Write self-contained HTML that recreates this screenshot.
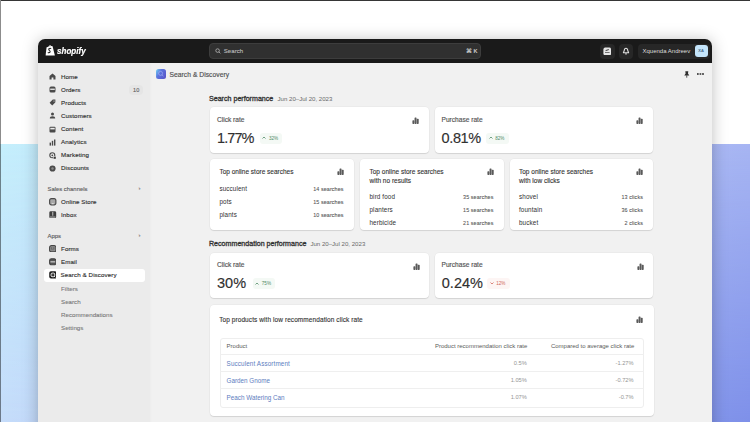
<!DOCTYPE html>
<html><head><meta charset="utf-8">
<style>
*{margin:0;padding:0;box-sizing:border-box}
html,body{width:750px;height:422px;overflow:hidden;background:#fff;font-family:"Liberation Sans",sans-serif;color:#303030}
#bg{position:absolute;left:0;top:144px;width:750px;height:278px;background:linear-gradient(90deg,#c5effc 0%,#a7b5f3 100%)}
#bg2{position:absolute;left:0;top:144px;width:750px;height:278px;background:linear-gradient(90deg,#c5dcfa 0%,#7e90e9 100%);-webkit-mask-image:linear-gradient(180deg,transparent 0%,#000 100%)}
#topline{position:absolute;left:1px;top:0;width:749px;height:1px;background:#363636}
#leftline{position:absolute;left:0;top:0;width:1px;height:422px;background:rgba(0,0,0,.45)}
#win{position:absolute;left:38px;top:38.6px;width:674px;height:400px;border-radius:7px 7px 0 0;overflow:hidden;background:#f1f1f1;box-shadow:0 1px 16px rgba(0,0,0,.26)}
#hdr{position:absolute;left:0;top:0;width:674px;height:24.9px;background:#1a1a1a}
#side{position:absolute;left:0;top:24.9px;width:112px;height:400px;background:#ebebeb;box-shadow:1px 0 2px rgba(0,0,0,.02)}
.a{position:absolute;white-space:nowrap}
.t{position:absolute;white-space:nowrap;line-height:10px;height:10px}
.nav{font-size:6.2px;font-weight:400;color:#303030;-webkit-text-stroke:.14px #303030;letter-spacing:.1px;margin-top:-.3px}
.sub{font-size:6.2px;font-weight:400;color:#777;-webkit-text-stroke:.08px #777}
.sec{font-size:5.9px;color:#5a5a5a;-webkit-text-stroke:.12px #5a5a5a;margin-top:.6px}
.ic{position:absolute;width:7px;height:7px}
.card{position:absolute;background:#fff;border-radius:4px;box-shadow:0 1px 1px rgba(0,0,0,.10),0 0 0 .5px rgba(0,0,0,.05)}
.ct{font-size:6.6px;font-weight:400;color:#555;-webkit-text-stroke:.16px #555}
.ch{font-size:6.5px;font-weight:400;color:#303030;-webkit-text-stroke:.1px #303030}
.big{font-size:14.5px;font-weight:400;color:#303030;-webkit-text-stroke:.15px #303030;line-height:10px}
.badge{position:absolute;height:10.5px;border-radius:3px;font-size:4.6px;line-height:12.5px;padding:0 4.3px 0 9.2px;white-space:nowrap}
.badge svg{position:absolute;left:2.6px;top:3.4px}
.g{background:#f4f9f5;color:#4f8a66}
.r{background:#fdf5f4;color:#d0675a}
.row{font-size:6.3px;color:#303030;letter-spacing:.12px}
.rv{font-size:5.4px;color:#555;text-align:right;-webkit-text-stroke:.08px #555;letter-spacing:.1px}
.th{font-size:6px;color:#5a5a5a}
.tv{font-size:5.7px;color:#959595;text-align:right}
.lk{font-size:6.3px;color:#5c7cc0;margin-top:.6px}
.hline{position:absolute;height:1px;background:#efefef}
</style></head><body>
<div id="bg"></div>
<div id="bg2"></div>
<div id="topline"></div>
<div id="leftline"></div>
<div id="win">
  <div id="hdr"></div>
  <div id="side"></div>
</div>

<!-- header content -->
<svg class="a" style="left:45.4px;top:44.4px" width="10.6" height="12" viewBox="0 0 10.6 12">
  <path d="M1.6 3.2 L6.2 1.9 L7.6 2.3 L9.9 11.4 L0.6 11.6 Z" fill="#fff"/>
  <path d="M3.6 3.4 Q4.6 .3 6.2 2.4" stroke="#fff" stroke-width="1" fill="none"/>
  <path d="M6.2 4.6 Q5.2 4 4.1 4.6 Q3.3 5.4 4.4 6.4 Q5.6 7.2 5 8.2 Q4.2 9 2.8 8.4" stroke="#1a1a1a" stroke-width="1.05" fill="none"/>
</svg>
<div class="t" style="left:57.3px;top:46px;font-size:9.6px;font-weight:700;font-style:italic;color:#fff;-webkit-text-stroke:.2px #fff;transform:scaleX(.84);transform-origin:0 0">shopify</div>

<div class="a" style="left:209px;top:43px;width:272px;height:15.5px;background:#303030;border-radius:4px;border:.5px solid #3d3d3d"></div>
<svg class="a" style="left:214.5px;top:47.5px" width="6" height="6" viewBox="0 0 6 6"><circle cx="2.6" cy="2.6" r="1.8" stroke="#b5b5b5" stroke-width=".8" fill="none"/><path d="M3.9 3.9 L5.4 5.4" stroke="#b5b5b5" stroke-width=".8"/></svg>
<div class="t" style="left:223.8px;top:45.7px;font-size:6.1px;color:#bdbdbd;-webkit-text-stroke:.1px #bdbdbd">Search</div>
<div class="t" style="left:466px;top:45.5px;font-size:5.6px;color:#c9c9c9;font-weight:700">⌘ K</div>

<div class="a" style="left:600px;top:43.5px;width:14.5px;height:15px;background:#272727;border-radius:4px"></div>
<svg class="a" style="left:602.8px;top:46.6px" width="8.6" height="8.6" viewBox="0 0 8.6 8.6"><rect x=".4" y=".6" width="7.8" height="7.6" rx="1.8" fill="#e6e6e6"/><path d="M2.6 3.6 L5.8 2.6" stroke="#333" stroke-width="1" fill="none"/><rect x="2" y="5.2" width="4.6" height=".8" fill="#555"/></svg>
<div class="a" style="left:618.5px;top:43.5px;width:14.5px;height:15px;background:#272727;border-radius:4px"></div>
<svg class="a" style="left:621.8px;top:47px" width="8" height="8" viewBox="0 0 8 8"><path d="M4 1.2 C2.6 1.2 2.3 2.4 2.2 3.6 L1.4 5.8 L6.6 5.8 L5.8 3.6 C5.7 2.4 5.4 1.2 4 1.2 Z" stroke="#e0e0e0" stroke-width="1.1" fill="none" stroke-linejoin="round"/><path d="M3.1 6.9 L4.9 6.9" stroke="#e0e0e0" stroke-width="1"/></svg>
<div class="a" style="left:637.5px;top:43.5px;width:72px;height:15px;background:#272727;border-radius:4px"></div>
<div class="t" style="left:642.5px;top:46px;font-size:6px;color:#dcdcdc;font-weight:400">Xquenda Andreev</div>
<div class="a" style="left:694.5px;top:44.5px;width:13.3px;height:12.7px;background:#c4e5fb;border-radius:3px;font-size:4px;line-height:12.7px;text-align:center;color:#4a6a8a;font-weight:700">XA</div>

<!-- sidebar -->
<div id="nav">
<svg class="ic" style="left:48.5px;top:72.8px" viewBox="0 0 7 7"><path d="M3.5 .6 L6.5 3 L6.5 6.6 L4.4 6.6 L4.4 4.6 L2.6 4.6 L2.6 6.6 L.5 6.6 L.5 3 Z" fill="#4a4a4a"/></svg>
<div class="t nav" style="left:61px;top:71.8px">Home</div>
<svg class="ic" style="left:48.5px;top:86px" viewBox="0 0 7 7"><rect x=".5" y=".5" width="6" height="6" rx="1.5" fill="#4a4a4a"/><rect x="1.2" y="2.6" width="4.6" height="1.3" fill="#ebebeb"/></svg>
<div class="t nav" style="left:61px;top:84.9px">Orders</div>
<div class="a" style="left:129.2px;top:85px;width:14px;height:10px;border-radius:4px;background:#e5e5e5;font-size:5.6px;line-height:11.6px;text-align:center;color:#5f5f5f;-webkit-text-stroke:.1px #5f5f5f">10</div>
<svg class="ic" style="left:48.5px;top:99.2px" viewBox="0 0 7 7"><path d="M3.8 .6 L6.4 .6 L6.4 3.2 L3.2 6.4 L.6 3.8 Z" fill="#4a4a4a"/><circle cx="5" cy="2" r=".6" fill="#ebebeb"/></svg>
<div class="t nav" style="left:61px;top:98px">Products</div>
<svg class="ic" style="left:48.5px;top:112.3px" viewBox="0 0 7 7"><circle cx="3.5" cy="1.9" r="1.5" fill="#4a4a4a"/><path d="M.8 6.6 Q.8 4.2 3.5 4.2 Q6.2 4.2 6.2 6.6 Z" fill="#4a4a4a"/></svg>
<div class="t nav" style="left:61px;top:111px">Customers</div>
<svg class="ic" style="left:48.5px;top:125.5px" viewBox="0 0 7 7"><rect x=".5" y=".8" width="6" height="5.6" rx="1" fill="#4a4a4a"/><rect x="1.3" y="1.8" width="4.4" height="1.6" fill="#ebebeb"/></svg>
<div class="t nav" style="left:61px;top:124.4px">Content</div>
<svg class="ic" style="left:48.5px;top:138.5px" viewBox="0 0 7 7"><rect x=".6" y="3.6" width="1.4" height="3" fill="#4a4a4a"/><rect x="2.8" y="1.8" width="1.4" height="4.8" fill="#4a4a4a"/><rect x="5" y=".5" width="1.4" height="6.1" fill="#4a4a4a"/></svg>
<div class="t nav" style="left:61px;top:137.4px">Analytics</div>
<svg class="ic" style="left:48.5px;top:151.5px" viewBox="0 0 7 7"><circle cx="3.3" cy="3.3" r="2.5" stroke="#4a4a4a" stroke-width="1.1" fill="none"/><circle cx="3.3" cy="3.3" r=".9" fill="#4a4a4a"/><rect x="4" y="4" width="3" height="3" fill="#ebebeb"/><rect x="4.6" y="4.6" width="2.2" height="2.2" fill="#3a3a3a"/></svg>
<div class="t nav" style="left:61px;top:150.3px">Marketing</div>
<svg class="ic" style="left:48.5px;top:164.8px" viewBox="0 0 7 7"><circle cx="3.5" cy="3.5" r="3.1" fill="#4a4a4a"/><circle cx="3.5" cy="3.5" r="1.2" fill="#8a8a8a"/></svg>
<div class="t nav" style="left:61px;top:163.6px">Discounts</div>

<div class="t sec" style="left:47.5px;top:183.4px">Sales channels</div>
<div class="t sec" style="left:138.6px;top:182.6px;color:#8a8a8a">›</div>
<svg class="ic" style="left:49px;top:198px;width:7.5px;height:7.5px" viewBox="0 0 7 7"><rect x=".6" y=".6" width="5.8" height="5.8" rx="1.5" fill="#a8a8a8" stroke="#4a4a4a" stroke-width="1.1"/><rect x="2.6" y="5" width="1.8" height=".8" fill="#eee"/></svg>
<div class="t nav" style="left:61px;top:197px">Online Store</div>
<svg class="ic" style="left:49px;top:210.8px;width:7.5px;height:7.5px" viewBox="0 0 7 7"><rect x=".3" y=".3" width="6.4" height="6.4" rx="1.3" fill="#3e3e3e"/><rect x="3" y=".8" width="1" height="3.6" fill="#bbb"/><rect x="1" y="5.2" width="5" height=".9" fill="#bbb"/></svg>
<div class="t nav" style="left:61px;top:210.3px">Inbox</div>

<div class="t sec" style="left:47.5px;top:230px">Apps</div>
<div class="t sec" style="left:138.6px;top:229.6px;color:#8a8a8a">›</div>
<svg class="ic" style="left:48.6px;top:244.8px;width:7.6px;height:7.6px" viewBox="0 0 7 7"><rect x=".6" y=".6" width="5.8" height="5.8" rx="1.6" fill="#9a9a9a" stroke="#444" stroke-width="1.1"/><rect x="1.8" y="2.2" width="1.4" height="1.2" fill="#555"/><rect x="3.8" y="2.2" width="1.4" height="1.2" fill="#555"/><rect x="1.8" y="4" width="3.4" height=".9" fill="#666"/></svg>
<div class="t nav" style="left:61px;top:244px">Forms</div>
<svg class="ic" style="left:48.6px;top:258.2px;width:7.6px;height:7.6px" viewBox="0 0 7 7"><rect x=".6" y=".8" width="5.8" height="5.4" rx="1.6" fill="#555" stroke="#444" stroke-width="1.1"/><rect x="1.3" y="2.8" width="4.4" height="1.4" fill="#b5b5b5"/></svg>
<div class="t nav" style="left:61px;top:257px">Email</div>
<div class="a" style="left:43.7px;top:269px;width:101.3px;height:13px;background:#fff;border-radius:3px"></div>
<svg class="ic" style="left:48.5px;top:271.2px;width:7.8px;height:7.8px" viewBox="0 0 7 7"><rect x=".2" y=".2" width="6.6" height="6.6" rx="1.6" fill="#1a1a1a"/><rect x="1.9" y="1.9" width="3.2" height="3.2" rx=".9" fill="none" stroke="#fff" stroke-width=".85"/><rect x="3.2" y="3.2" width=".7" height=".7" fill="#fff"/><path d="M4.6 4.6 L5.6 5.6" stroke="#fff" stroke-width=".8"/></svg>
<div class="t nav" style="left:60.5px;top:270px">Search &amp; Discovery</div>
<div class="t sub" style="left:61px;top:283.6px;font-weight:400">Filters</div>
<div class="t sub" style="left:61px;top:296.7px;font-weight:400">Search</div>
<div class="t sub" style="left:61px;top:309.6px;font-weight:400">Recommendations</div>
<div class="t sub" style="left:61px;top:322.7px;font-weight:400">Settings</div>
</div>

<!-- app bar -->
<div class="a" style="left:156px;top:69px;width:10px;height:10px;border-radius:2.5px;background:linear-gradient(120deg,#72d6f4 0%,#5c74de 38%,#5a52c6 100%)"></div>
<svg class="a" style="left:156px;top:69px" width="10" height="10" viewBox="0 0 10 10"><circle cx="4.6" cy="4.4" r="2" stroke="#c8d0ff" stroke-width=".7" fill="none" opacity=".6"/><path d="M6 5.8 L7.6 7.4" stroke="#c8d0ff" stroke-width=".8" opacity=".6"/></svg>
<div class="t" style="left:169.5px;top:69.5px;font-size:6.7px;color:#505050;-webkit-text-stroke:.15px #505050;letter-spacing:.05px">Search &amp; Discovery</div>
<svg class="a" style="left:684.2px;top:70.8px" width="5.6" height="7" viewBox="0 0 5.6 7"><path d="M1.3 .3 L4.3 .3 L4 2.6 L5.3 4.4 L.3 4.4 L1.6 2.6 Z" fill="#2e2e2e"/><rect x="2.4" y="4.3" width=".8" height="2.4" fill="#2e2e2e"/></svg>
<div class="a" style="left:696.5px;top:73.2px;width:7.5px;height:1.5px;background:radial-gradient(circle at .75px .75px,#505050 .65px,transparent .75px) 0 0/2.6px 1.5px repeat-x"></div>

<!-- search performance -->
<div class="t" style="left:209px;top:93.5px;font-size:7.1px;font-weight:400;color:#303030;-webkit-text-stroke:.3px #303030">Search performance</div>
<div class="t" style="left:277.5px;top:94px;font-size:6.1px;color:#6a6a6a">Jun 20–Jul 20, 2023</div>

<div class="card" style="left:209.7px;top:107px;width:219px;height:45.8px"></div>
<div class="t ct" style="left:217px;top:114.5px">Click rate</div>
<div class="t big" style="left:217px;top:133px;letter-spacing:-.9px">1.77%</div>
<div class="badge g" style="left:259.8px;top:133px;"><svg width="4" height="3" viewBox="0 0 4 3"><path d="M.5 2.5 L2 1 L3.5 2.5" stroke="currentColor" stroke-width=".8" fill="none"/></svg>32%</div>
<svg class="a" style="left:412.2px;top:117px" width="7" height="7" viewBox="0 0 7 7"><rect x=".4" y="3.2" width="2" height="3.8" rx=".7" fill="#5a5a5a"/><rect x="2.55" y=".4" width="2" height="6.6" rx=".7" fill="#5a5a5a"/><rect x="4.7" y="1.8" width="2" height="5.2" rx=".7" fill="#5a5a5a"/></svg>

<div class="card" style="left:434.5px;top:107px;width:218.8px;height:45.8px"></div>
<div class="t ct" style="left:441.5px;top:114.5px">Purchase rate</div>
<div class="t big" style="left:441.6px;top:133px;letter-spacing:-.4px">0.81%</div>
<div class="badge g" style="left:486px;top:133px;"><svg width="4" height="3" viewBox="0 0 4 3"><path d="M.5 2.5 L2 1 L3.5 2.5" stroke="currentColor" stroke-width=".8" fill="none"/></svg>82%</div>
<svg class="a" style="left:636.4px;top:117px" width="7" height="7" viewBox="0 0 7 7"><rect x=".4" y="3.2" width="2" height="3.8" rx=".7" fill="#5a5a5a"/><rect x="2.55" y=".4" width="2" height="6.6" rx=".7" fill="#5a5a5a"/><rect x="4.7" y="1.8" width="2" height="5.2" rx=".7" fill="#5a5a5a"/></svg>

<!-- three cards -->
<div class="card" style="left:209.7px;top:158.6px;width:143.9px;height:71.6px"></div>
<div class="t ch" style="left:219.4px;top:166.5px">Top online store searches</div>
<svg class="a" style="left:337px;top:167.5px" width="7" height="7" viewBox="0 0 7 7"><rect x=".4" y="3.2" width="2" height="3.8" rx=".7" fill="#5a5a5a"/><rect x="2.55" y=".4" width="2" height="6.6" rx=".7" fill="#5a5a5a"/><rect x="4.7" y="1.8" width="2" height="5.2" rx=".7" fill="#5a5a5a"/></svg>
<div class="t row" style="left:219.4px;top:183.6px">succulent</div>
<div class="t row" style="left:219.4px;top:196.5px">pots</div>
<div class="t row" style="left:219.4px;top:210.2px">plants</div>
<div class="t rv" style="left:293px;width:50.6px;top:183.6px">14 searches</div>
<div class="t rv" style="left:293px;width:50.6px;top:196.5px">15 searches</div>
<div class="t rv" style="left:293px;width:50.6px;top:210px">10 searches</div>

<div class="card" style="left:360.2px;top:158.6px;width:143.4px;height:71.6px"></div>
<div class="t ch" style="left:369.5px;top:166.5px;line-height:9px">Top online store searches<br>with no results</div>
<svg class="a" style="left:486.5px;top:167.5px" width="7" height="7" viewBox="0 0 7 7"><rect x=".4" y="3.2" width="2" height="3.8" rx=".7" fill="#5a5a5a"/><rect x="2.55" y=".4" width="2" height="6.6" rx=".7" fill="#5a5a5a"/><rect x="4.7" y="1.8" width="2" height="5.2" rx=".7" fill="#5a5a5a"/></svg>
<div class="t row" style="left:369.5px;top:192px">bird food</div>
<div class="t row" style="left:369.5px;top:204.8px">planters</div>
<div class="t row" style="left:369.5px;top:217.7px">herbicide</div>
<div class="t rv" style="left:443px;width:50.5px;top:192px">35 searches</div>
<div class="t rv" style="left:443px;width:50.5px;top:204.8px">15 searches</div>
<div class="t rv" style="left:443px;width:50.5px;top:217.7px">21 searches</div>

<div class="card" style="left:509.8px;top:158.6px;width:143.5px;height:71.6px"></div>
<div class="t ch" style="left:519px;top:166.5px;line-height:9px">Top online store searches<br>with low clicks</div>
<svg class="a" style="left:636px;top:167.5px" width="7" height="7" viewBox="0 0 7 7"><rect x=".4" y="3.2" width="2" height="3.8" rx=".7" fill="#5a5a5a"/><rect x="2.55" y=".4" width="2" height="6.6" rx=".7" fill="#5a5a5a"/><rect x="4.7" y="1.8" width="2" height="5.2" rx=".7" fill="#5a5a5a"/></svg>
<div class="t row" style="left:519px;top:192px">shovel</div>
<div class="t row" style="left:519px;top:204.8px">fountain</div>
<div class="t row" style="left:519px;top:217.7px">bucket</div>
<div class="t rv" style="left:593px;width:50px;top:192px">13 clicks</div>
<div class="t rv" style="left:593px;width:50px;top:204.8px">36 clicks</div>
<div class="t rv" style="left:593px;width:50px;top:217.7px">2 clicks</div>

<!-- recommendation performance -->
<div class="t" style="left:209px;top:238.8px;font-size:7.1px;font-weight:400;color:#303030;-webkit-text-stroke:.3px #303030">Recommendation performance</div>
<div class="t" style="left:310.4px;top:239.3px;font-size:6.1px;color:#6a6a6a">Jun 20–Jul 20, 2023</div>

<div class="card" style="left:209.7px;top:252.9px;width:219px;height:44.9px"></div>
<div class="t ct" style="left:217px;top:259.6px">Click rate</div>
<div class="t big" style="left:217px;top:278.2px">30%</div>
<div class="badge g" style="left:252.6px;top:278.2px;"><svg width="4" height="3" viewBox="0 0 4 3"><path d="M.5 2.5 L2 1 L3.5 2.5" stroke="currentColor" stroke-width=".8" fill="none"/></svg>75%</div>
<svg class="a" style="left:412.5px;top:262.5px" width="7" height="7" viewBox="0 0 7 7"><rect x=".4" y="3.2" width="2" height="3.8" rx=".7" fill="#5a5a5a"/><rect x="2.55" y=".4" width="2" height="6.6" rx=".7" fill="#5a5a5a"/><rect x="4.7" y="1.8" width="2" height="5.2" rx=".7" fill="#5a5a5a"/></svg>

<div class="card" style="left:434.5px;top:252.9px;width:218.8px;height:44.9px"></div>
<div class="t ct" style="left:441.5px;top:259.6px">Purchase rate</div>
<div class="t big" style="left:441.8px;top:278.2px">0.24%</div>
<div class="badge r" style="left:487px;top:278.2px;"><svg width="4" height="3" viewBox="0 0 4 3"><path d="M.5 .5 L2 2 L3.5 .5" stroke="currentColor" stroke-width=".8" fill="none"/></svg>12%</div>
<svg class="a" style="left:636.5px;top:262.5px" width="7" height="7" viewBox="0 0 7 7"><rect x=".4" y="3.2" width="2" height="3.8" rx=".7" fill="#5a5a5a"/><rect x="2.55" y=".4" width="2" height="6.6" rx=".7" fill="#5a5a5a"/><rect x="4.7" y="1.8" width="2" height="5.2" rx=".7" fill="#5a5a5a"/></svg>

<!-- table card -->
<div class="card" style="left:209.7px;top:304.6px;width:444.2px;height:111.2px"></div>
<div class="t ch" style="left:219.2px;top:314.9px;letter-spacing:.08px">Top products with low recommendation click rate</div>
<svg class="a" style="left:636px;top:316px" width="7" height="7" viewBox="0 0 7 7"><rect x=".4" y="3.2" width="2" height="3.8" rx=".7" fill="#5a5a5a"/><rect x="2.55" y=".4" width="2" height="6.6" rx=".7" fill="#5a5a5a"/><rect x="4.7" y="1.8" width="2" height="5.2" rx=".7" fill="#5a5a5a"/></svg>
<div class="a" style="left:219.8px;top:337.8px;width:424.4px;height:70px;border:.6px solid #eeeeee;border-radius:3px"></div>
<div class="hline" style="left:220px;top:354px;width:424px"></div>
<div class="hline" style="left:220px;top:371px;width:424px"></div>
<div class="hline" style="left:220px;top:388.2px;width:424px"></div>
<div class="t th" style="left:226.6px;top:341.4px">Product</div>
<div class="t th" style="left:380px;width:147.3px;text-align:right;top:341.4px">Product recommendation click rate</div>
<div class="t th" style="left:530px;width:104.3px;text-align:right;top:341.4px">Compared to average click rate</div>
<div class="t lk" style="left:226.6px;top:358px;letter-spacing:.12px">Succulent Assortment</div>
<div class="t lk" style="left:226.6px;top:375px">Garden Gnome</div>
<div class="t lk" style="left:226.6px;top:392px">Peach Watering Can</div>
<div class="t tv" style="left:480px;width:46.8px;top:358px">0.5%</div>
<div class="t tv" style="left:480px;width:46.8px;top:375px">1.05%</div>
<div class="t tv" style="left:480px;width:46.8px;top:392px">1.07%</div>
<div class="t tv" style="left:580px;width:53.6px;top:358px">-1.27%</div>
<div class="t tv" style="left:580px;width:53.6px;top:375px">-0.72%</div>
<div class="t tv" style="left:580px;width:53.6px;top:392px">-0.7%</div>
</body></html>
